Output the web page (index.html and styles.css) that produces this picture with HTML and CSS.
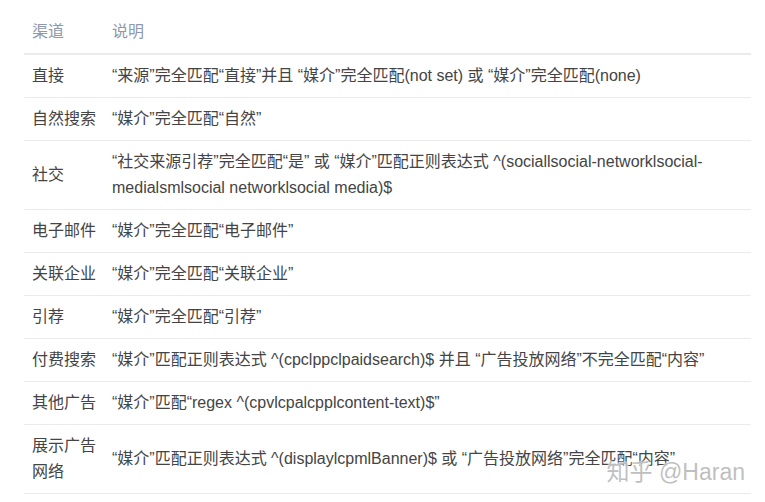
FILE: index.html
```html
<!DOCTYPE html>
<html lang="zh-CN">
<head>
  <meta charset="UTF-8">
  <meta name="viewport" content="width=device-width, initial-scale=1.0">
  <title>渠道说明</title>
  <link rel="stylesheet" href="styles.css">
</head>
<body>
  <div class="table-wrap">
    <table class="channel-table">
      <colgroup>
        <col class="col-name">
        <col>
      </colgroup>
      <thead>
        <tr>
          <th>渠道</th>
          <th>说明</th>
        </tr>
      </thead>
      <tbody>
        <tr>
          <td>直接</td>
          <td>“来源”完全匹配“直接”并且 “媒介”完全匹配(not set) 或 “媒介”完全匹配(none)</td>
        </tr>
        <tr>
          <td>自然搜索</td>
          <td>“媒介”完全匹配“自然”</td>
        </tr>
        <tr>
          <td>社交</td>
          <td>“社交来源引荐”完全匹配“是” 或 “媒介”匹配正则表达式 ^(sociallsocial-networklsocial-medialsmlsocial networklsocial media)$</td>
        </tr>
        <tr>
          <td>电子邮件</td>
          <td>“媒介”完全匹配“电子邮件”</td>
        </tr>
        <tr>
          <td>关联企业</td>
          <td>“媒介”完全匹配“关联企业”</td>
        </tr>
        <tr>
          <td>引荐</td>
          <td>“媒介”完全匹配“引荐”</td>
        </tr>
        <tr>
          <td>付费搜索</td>
          <td>“媒介”匹配正则表达式 ^(cpclppclpaidsearch)$ 并且 “广告投放网络”不完全匹配“内容”</td>
        </tr>
        <tr>
          <td>其他广告</td>
          <td>“媒介”匹配“regex ^(cpvlcpalcpplcontent-text)$”</td>
        </tr>
        <tr>
          <td>展示广告网络</td>
          <td>“媒介”匹配正则表达式 ^(displaylcpmlBanner)$ 或 “广告投放网络”完全匹配“内容”</td>
        </tr>
      </tbody>
    </table>
    <div class="watermark">知乎 @Haran</div>
  </div>
</body>
</html>
```

FILE: styles.css
```css
body {
  margin: 0;
  padding: 11px 14px 0 24px;
  background: #fff;
  font-family: "Liberation Sans", "Noto Sans CJK SC", sans-serif;
  font-size: 16px;
  color: #444;
}

.table-wrap {
  position: relative;
  width: 727px;
}

.channel-table {
  width: 100%;
  border-collapse: collapse;
  table-layout: fixed;
}

.channel-table .col-name {
  width: 80px;
}

.channel-table th,
.channel-table td {
  padding: 8px;
  line-height: 26px;
  text-align: left;
  vertical-align: middle;
}

.channel-table th + th,
.channel-table td + td {
  padding-left: 8px;
}

.channel-table th {
  font-weight: normal;
  color: #8f99ab;
  border-bottom: 2px solid #ebebeb;
}

.channel-table td {
  border-bottom: 1px solid #ebebeb;
}

.watermark {
  position: absolute;
  right: 6px;
  bottom: 7px;
  font-size: 23px;
  color: rgba(170, 170, 170, 0.75);
  text-shadow: 0 0 2px #fff, 0 0 2px #fff;
}
```
